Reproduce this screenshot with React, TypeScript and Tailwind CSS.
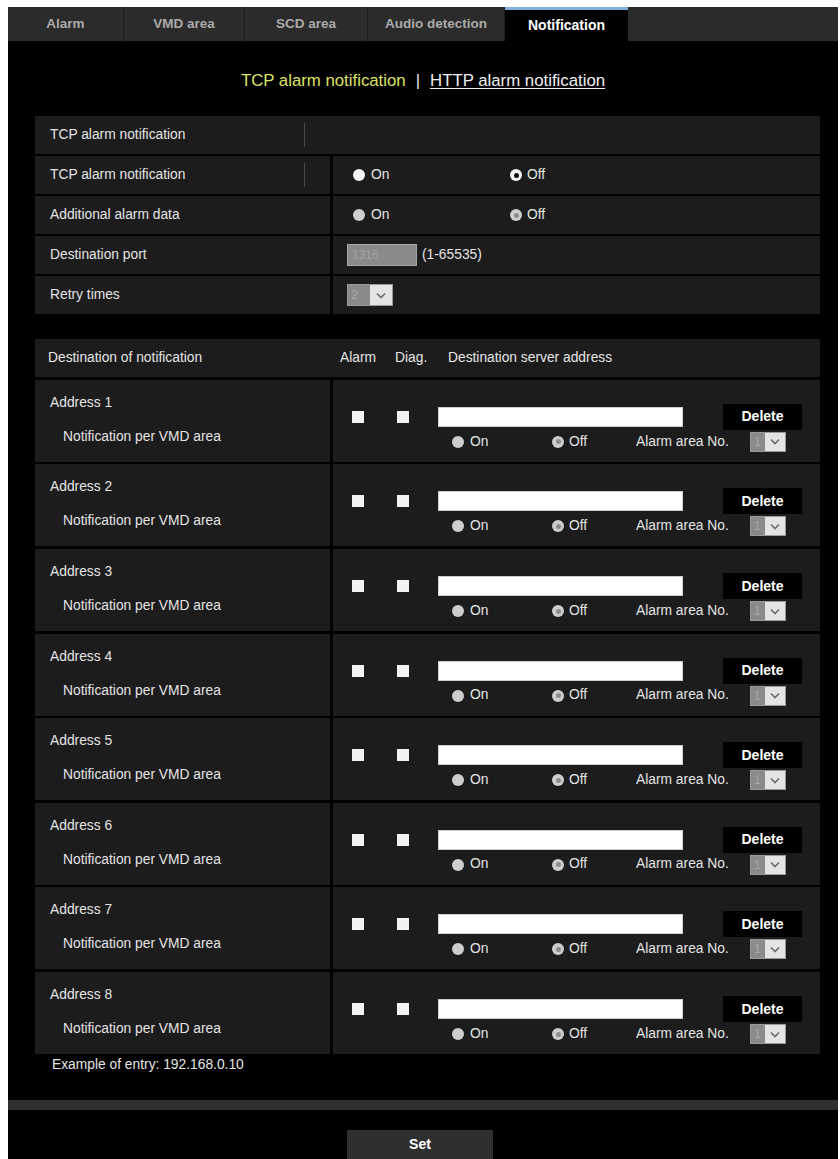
import React from 'react';

const tabs = [
  { label: 'Alarm', w: 'w-[116px]' },
  { label: 'VMD area', w: 'w-[121px]' },
  { label: 'SCD area', w: 'w-[123px]' },
  { label: 'Audio detection', w: 'w-[137px]' },
];

// radio button drawn as plain circles (dim = greyed out / disabled state)
const Radio = ({ checked = false, dim = false }: { checked?: boolean; dim?: boolean }) => (
  <span
    className={`inline-flex w-[12px] h-[12px] rounded-full items-center justify-center shrink-0 ${
      dim ? 'bg-[#cdcdcd]' : 'bg-[#f4f4f4]'
    }`}
  >
    {checked && (
      <span className={`w-[5px] h-[5px] rounded-full ${dim ? 'bg-[#8c8c8c]' : 'bg-[#111]'}`} />
    )}
  </span>
);

const Chevron = () => (
  <svg width="10" height="7" viewBox="0 0 10 7" fill="none">
    <path d="M1 1.5 L5 5.5 L9 1.5" stroke="#6b6b6b" strokeWidth="1.6" />
  </svg>
);

const SmallSelect = ({ value, left, right, h }: { value: string; left: string; right: string; h: string }) => (
  <div className={`flex ${h} border border-[#9a9a9a]`}>
    <div className={`${left} bg-[#8a8a8a] text-[#a9a9a9] text-[12px] leading-none flex items-center pl-[3px]`}>
      {value}
    </div>
    <div className={`${right} bg-[#e4e4e4] flex items-center justify-center`}>
      <Chevron />
    </div>
  </div>
);

const OnOff = ({ onDim, offDim, offChecked = true }: { onDim?: boolean; offDim?: boolean; offChecked?: boolean }) => (
  <div className="flex items-center">
    <div className="flex items-center w-[157px]">
      <Radio dim={onDim} />
      <span className="ml-[6px]">On</span>
    </div>
    <div className="flex items-center">
      <Radio checked={offChecked} dim={offDim} />
      <span className="ml-[5px]">Off</span>
    </div>
  </div>
);

const Row = ({ label, tick, children }: { label: string; tick?: boolean; children: React.ReactNode }) => (
  <div className="flex h-[38px] gap-[3px]">
    <div className="w-[295px] bg-[#1c1c1c] flex items-center pl-[15px]">
      <span>{label}</span>
      {tick && <span className="ml-auto mr-[25px] w-px h-[24px] bg-[#4a4a4a]" />}
    </div>
    <div className="flex-1 bg-[#1c1c1c] flex items-center">{children}</div>
  </div>
);

const AddressRow = ({ n }: { n: number }) => (
  <div className="flex h-[82px] gap-[3px]">
    <div className="w-[295px] bg-[#1c1c1c] flex flex-col pl-[15px] pt-[15px]">
      <div className="leading-[16px]">Address {n}</div>
      <div className="leading-[16px] mt-[18px] pl-[13px]">Notification per VMD area</div>
    </div>
    <div className="flex-1 bg-[#1c1c1c] flex flex-col pt-[24px]">
      <div className="flex items-center h-[26px]">
        <span className="ml-[19px] w-[12px] h-[12px] bg-[#f2f2f2]" />
        <span className="ml-[33px] w-[12px] h-[12px] bg-[#f2f2f2]" />
        <span className="ml-[29px] w-[245px] h-[20px] bg-white border border-[#cfcfcf]" />
        <button className="ml-[40px] w-[79px] h-[26px] bg-black text-white font-bold text-[14px]">
          Delete
        </button>
      </div>
      <div className="flex items-center h-[20px] mt-[2px]">
        <div className="ml-[119px] flex items-center w-[100px]">
          <Radio dim />
          <span className="ml-[6px]">On</span>
        </div>
        <div className="flex items-center w-[84px]">
          <Radio checked dim />
          <span className="ml-[5px]">Off</span>
        </div>
        <span className="w-[114px]">Alarm area No.</span>
        <SmallSelect value="1" left="w-[14px]" right="w-[20px]" h="h-[20px]" />
      </div>
    </div>
  </div>
);

export default function App() {
  return (
    <div className="w-[840px] h-[1159px] bg-white pl-[8px] pt-[7px] pr-[2px] overflow-hidden font-['Liberation_Sans',Arial,sans-serif] text-[13.8px] text-[#e4e4e4]">
      <div className="h-full bg-black flex flex-col">
        {/* tab strip */}
        <div className="flex h-[35px] bg-[#2b2b2b]">
          {tabs.map((t) => (
            <div
              key={t.label}
              className={`${t.w} flex items-center justify-center border-r border-[#1d1d1d] text-[#aaaaaa] font-bold text-[13.5px]`}
            >
              {t.label}
            </div>
          ))}
          <div className="w-[123px] bg-black border-t-[3px] border-[#7fb0dc] flex items-center justify-center text-white font-bold text-[14px]">
            Notification
          </div>
          <div className="flex-1" />
        </div>

        <div className="h-[77px] pt-[4px] flex items-center justify-center text-[16.8px]">
          <span className="text-[#dce264]">TCP alarm notification</span>
          <span className="mx-[10px] text-[#e8e8e8]">|</span>
          <span className="text-[#f0f0f0] underline underline-offset-2">HTTP alarm notification</span>
        </div>

        {/* TCP settings */}
        <div className="ml-[27px] w-[785px] flex flex-col gap-[2px]">
          <div className="h-[38px] bg-[#1c1c1c] flex items-center pl-[15px]">
            <span>TCP alarm notification</span>
            <span className="ml-auto mr-[515px] w-px h-[24px] bg-[#4a4a4a]" />
          </div>
          <Row label="TCP alarm notification" tick>
            <div className="pl-[20px]">
              <OnOff />
            </div>
          </Row>
          <Row label="Additional alarm data">
            <div className="pl-[20px]">
              <OnOff onDim offDim />
            </div>
          </Row>
          <Row label="Destination port">
            <div className="pl-[14px] flex items-center">
              <div className="w-[70px] h-[22px] bg-[#8a8a8a] border border-[#a5a5a5] text-[#a3a3a3] text-[12px] flex items-center pl-[4px]">
                1316
              </div>
              <span className="ml-[5px]">(1-65535)</span>
            </div>
          </Row>
          <Row label="Retry times">
            <div className="pl-[14px]">
              <SmallSelect value="2" left="w-[22px]" right="w-[22px]" h="h-[22px]" />
            </div>
          </Row>
        </div>

        {/* destinations */}
        <div className="ml-[27px] mt-[25px] w-[785px] flex flex-col gap-[2.6px]">
          <div className="h-[38px] bg-[#1c1c1c] flex items-center">
            <span className="pl-[13px] w-[305px]">Destination of notification</span>
            <span className="w-[55px]">Alarm</span>
            <span className="w-[53px]">Diag.</span>
            <span>Destination server address</span>
          </div>
          {[1, 2, 3, 4, 5, 6, 7, 8].map((n) => (
            <AddressRow key={n} n={n} />
          ))}
        </div>

        <div className="pl-[44px] mt-[3px] leading-[16px]">Example of entry: 192.168.0.10</div>

        <div className="mt-[27px] h-[10px] bg-[#2f2f2f]" />

        <div className="mt-[20px] ml-[339px] w-[146px] h-[30px] bg-[#2f2f2f] flex items-center justify-center text-white font-bold text-[14px]">
          Set
        </div>
      </div>
    </div>
  );
}
